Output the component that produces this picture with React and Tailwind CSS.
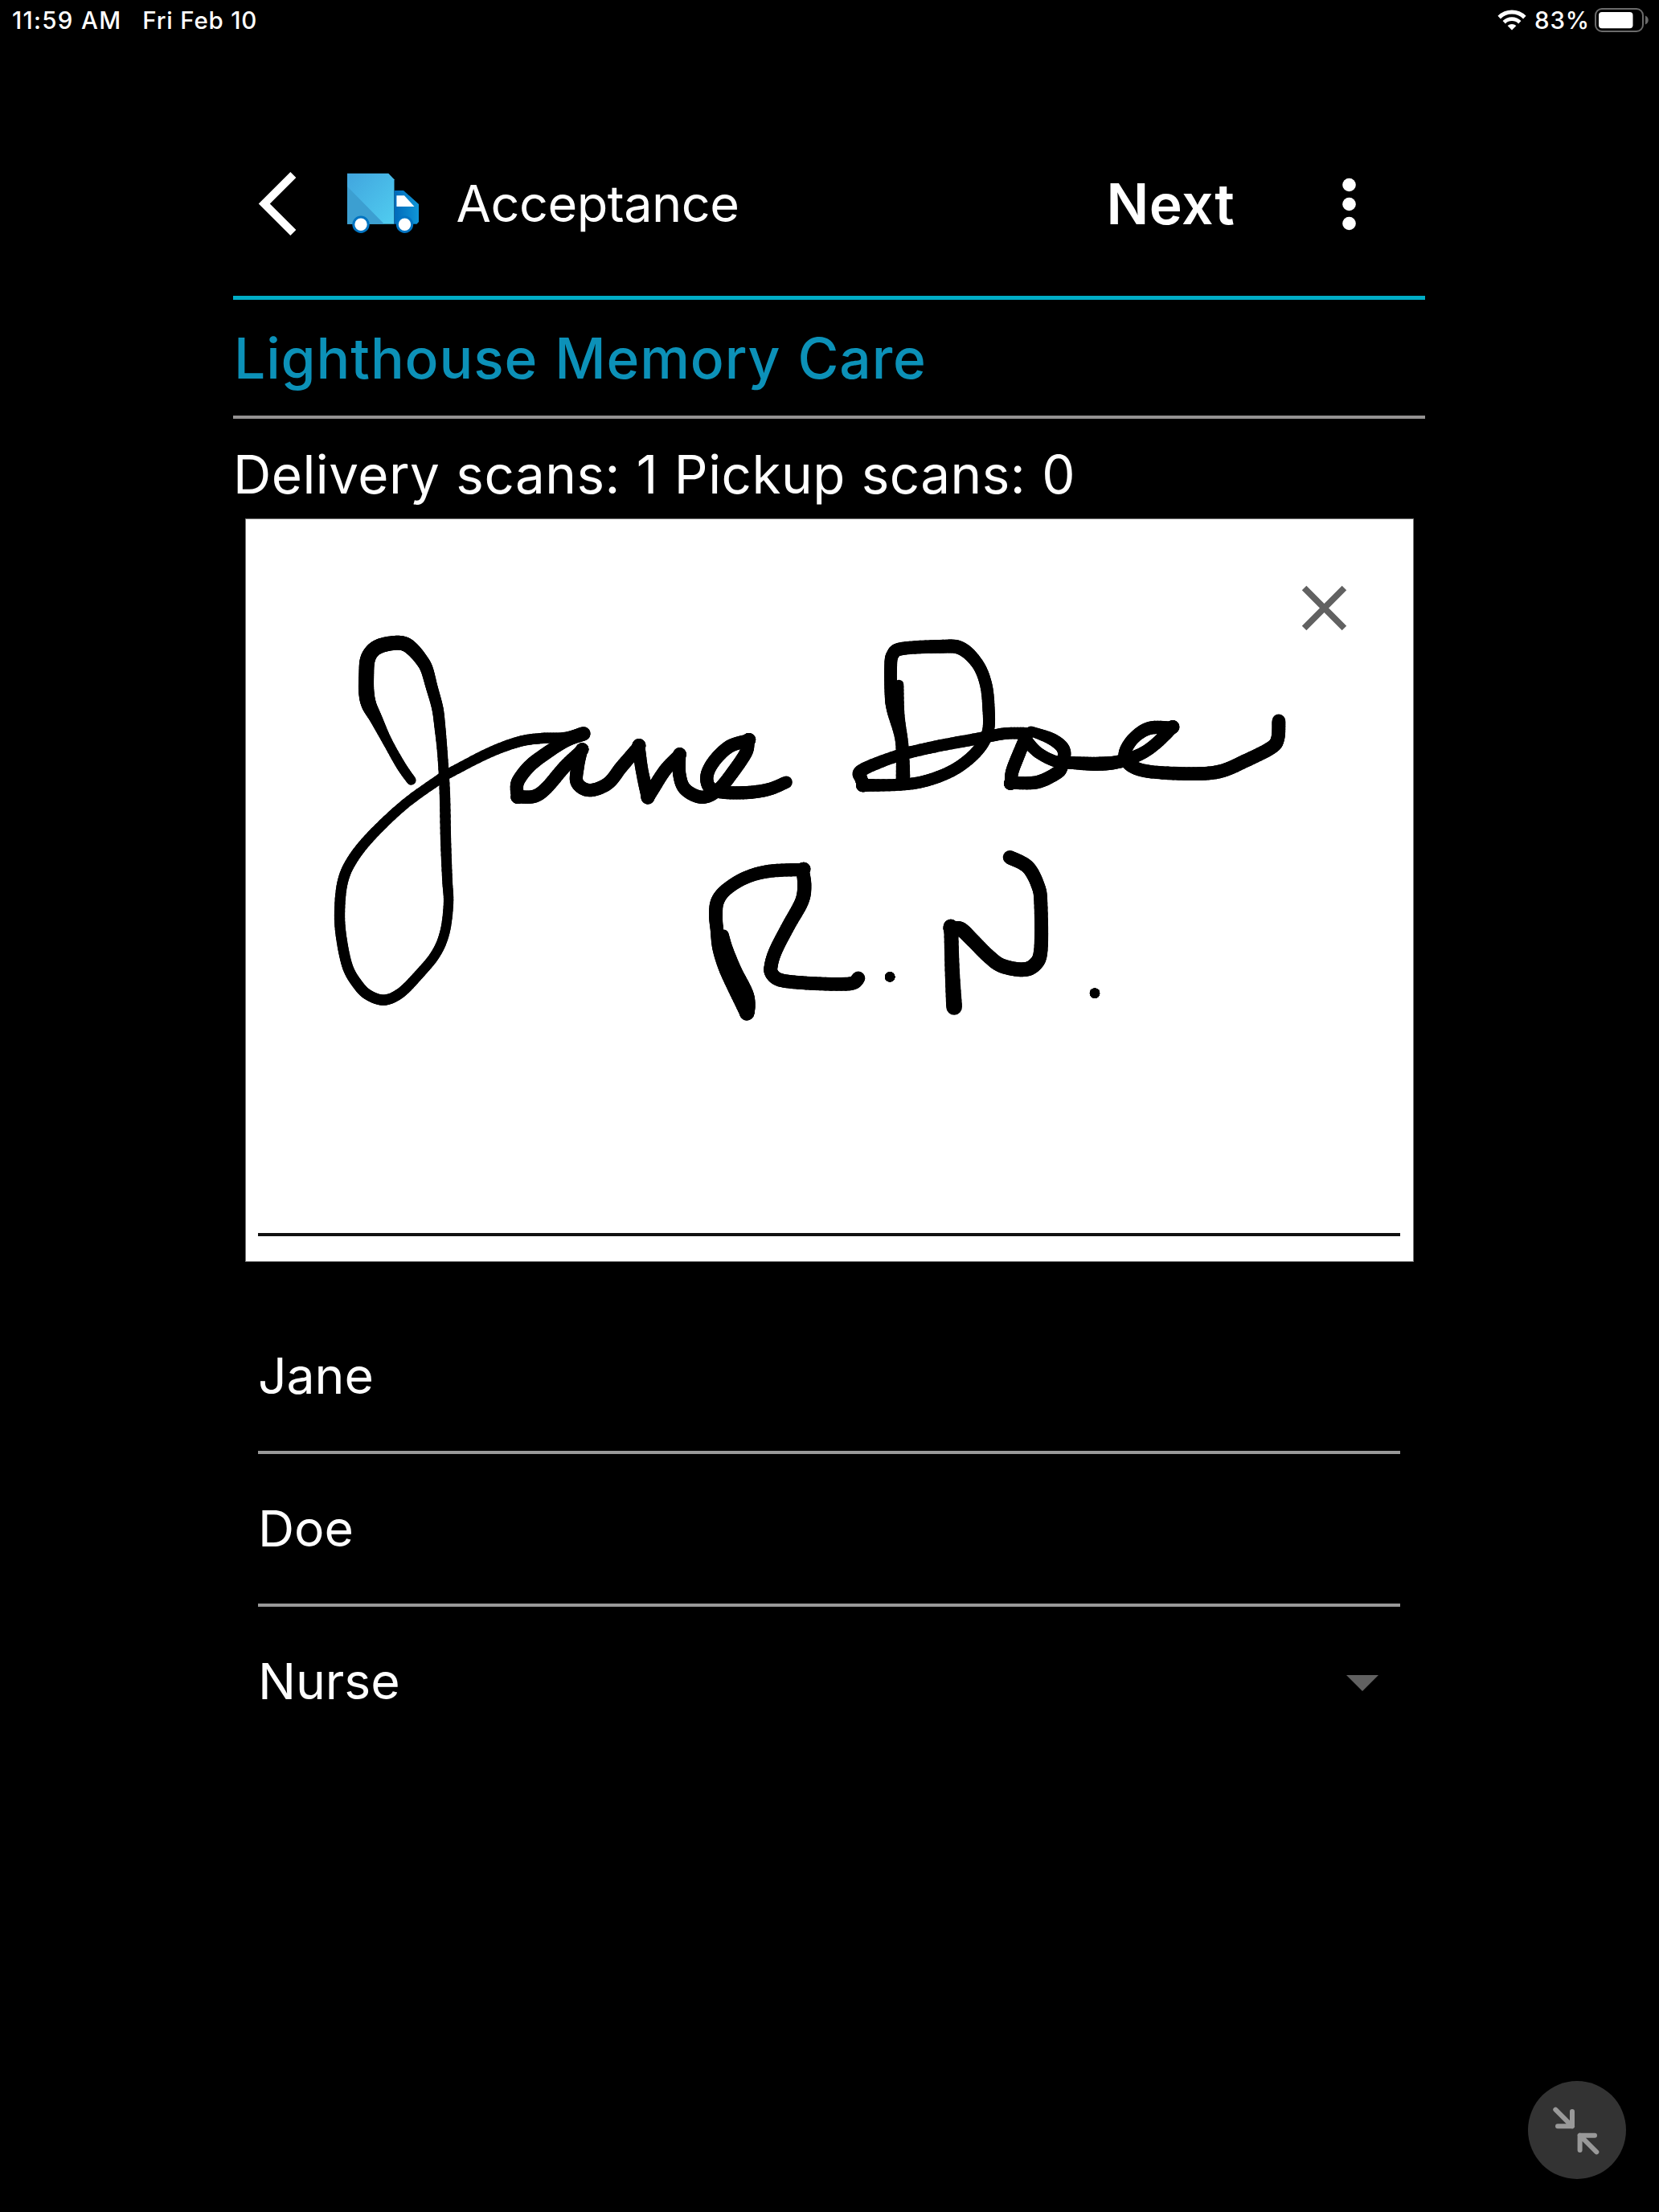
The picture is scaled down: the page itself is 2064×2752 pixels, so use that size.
import React, { useState } from "react";
import { MdArrowBackIosNew, MdClose } from "react-icons/md";

// Each stroke is a list of [x, y, penWidth]. x/y are digitizer units,
// turned into pad pixels with the origin and resolution of its group.
const signature = [
  {
    origin: [94.3, 114.5],
    res: [2.613, 3],
    strokes: [
      [
        [291, 631, 11], [257, 575, 11.5], [212, 483, 11.5], [176, 400, 15], [153, 348, 18],
        [145, 300, 18.5], [145, 240, 18], [148, 185, 18], [163, 150, 17.5], [190, 129, 17.5],
        [237, 118, 17], [270, 122, 17], [296, 143, 16.5], [322, 178, 15.5], [341, 215, 15],
        [358, 285, 14], [376, 360, 13.5], [384, 430, 13], [393, 540, 12], [400, 680, 12.5],
        [403, 850, 12.5], [408, 1000, 12], [412, 1090, 11.5], [400, 1198, 11.5], [370, 1280, 11.5],
        [315, 1357, 11.5], [257, 1424, 12], [203, 1451, 12.5], [150, 1431, 12.5], [115, 1390, 12.5],
        [85, 1330, 12.5], [66, 1235, 12.5], [58, 1135, 12.5], [67, 1015, 12.5], [98, 930, 12.5],
        [162, 837, 12], [270, 720, 11.5], [385, 625, 11.5], [415, 604, 11.5], [540, 530, 12],
        [640, 487, 12.5], [715, 474, 12.5], [790, 471, 12.5], [851, 457, 16.5],
      ],
      [
        [851, 457, 16.5], [800, 480, 15], [745, 518, 15], [680, 573, 15.5], [640, 630, 15.5],
        [634, 665, 15.5], [639, 692, 15.5], [639, 692, 15.5], [690, 691, 15.5], [730, 660, 15.5],
        [790, 580, 15.5], [843, 522, 15], [843, 522, 15], [832, 580, 15.5], [830, 640, 15.5],
        [870, 668, 15.5], [930, 643, 15.5], [975, 580, 15.5], [1028, 510, 15.5], [1030, 510, 15.5],
        [1042, 600, 15], [1059, 684, 16], [1065, 684, 16], [1115, 595, 15.5], [1160, 541, 15.5],
        [1162, 541, 15.5], [1163, 610, 15.5], [1182, 665, 15.5], [1237, 694, 15.5], [1290, 665, 15.5],
        [1340, 595, 15.5], [1380, 525, 15.5], [1385, 483, 15.5], [1385, 483, 15.5], [1325, 505, 15.5],
        [1275, 560, 15.5], [1252, 615, 15.5], [1263, 660, 15.5], [1310, 676, 15.5], [1390, 676, 15.5],
        [1455, 664, 15], [1510, 638, 14.5],
      ],
    ],
  },
  {
    origin: [734.5, 114.3],
    res: [2.529, 3],
    strokes: [
      [[197, 274, 11], [200, 390, 11], [208, 510, 15], [210, 635, 17]],
      [
        [210, 600, 16], [203, 480, 13.5], [178, 370, 14.5], [172, 310, 15], [171, 210, 15],
        [177, 163, 15], [207, 140, 15.5], [325, 132, 16], [391, 138, 16], [443, 195, 14.5],
        [470, 270, 14.5], [479, 360, 14.5], [477, 450, 14], [445, 520, 14], [380, 585, 14],
        [300, 627, 14], [215, 647, 14], [92, 650, 15], [88, 649, 15], [78, 625, 15],
        [80, 594, 15], [190, 541, 14], [310, 506, 14], [445, 476, 14], [530, 457, 14],
        [600, 456, 14],
      ],
      [
        [600, 460, 15], [572, 540, 15.5], [553, 600, 15.5], [550, 641, 15], [554, 641, 15],
        [630, 639, 15.5], [690, 607, 15.5], [709, 580, 15.5], [716, 520, 15.5], [680, 479, 14.5],
        [612, 448, 11.5],
      ],
      [
        [597, 482, 14.5], [635, 528, 13.5], [690, 561, 13.5], [740, 566, 15], [820, 570, 16.5],
        [890, 562, 15.5], [960, 532, 14.5], [1010, 490, 14.5], [1054, 436, 15.5], [1050, 436, 15.5],
        [985, 437, 15.5], [935, 475, 14.5], [908, 530, 15], [922, 572, 15.5], [980, 598, 15.5],
        [1110, 607, 16], [1205, 599, 16], [1285, 560, 16], [1368, 510, 16], [1389, 475, 16],
        [1392, 410, 16],
      ],
    ],
  },
  {
    origin: [554.3, 394.3],
    res: [2.904, 3],
    strokes: [
      [
        [117, 366, 11], [132, 420, 11.5], [160, 500, 14], [187, 560, 16], [200, 600, 18],
        [202, 635, 18.5], [200, 660, 18],
      ],
      [
        [200, 660, 17], [160, 570, 18.5], [124, 490, 18], [100, 415, 16.5], [92, 350, 15.5],
        [88, 300, 16], [93, 245, 16], [125, 200, 15], [195, 155, 15], [280, 131, 15.5],
        [397, 125, 15.5], [401, 127, 15.5], [408, 185, 16.5], [398, 245, 16.5], [350, 335, 16],
        [305, 425, 16], [288, 480, 16], [290, 513, 16], [325, 538, 16], [430, 549, 16],
        [570, 551, 16], [603, 530, 16],
      ],
      [[717, 525, 11.5], [717, 525.5, 11.5]],
      [
        [949, 638, 19], [942, 500, 17.5], [938, 348, 17], [938, 348, 17], [972, 347, 17.5],
        [1015, 388, 17], [1070, 445, 17], [1120, 483, 17], [1195, 498, 17], [1240, 480, 17],
        [1262, 425, 16.5], [1262, 250, 16], [1252, 185, 16], [1215, 115, 16.5], [1150, 79, 16.5],
      ],
      [[1457, 586, 11.5], [1457, 586.5, 11.5]],
    ],
  },
];

const STEPS = 8;
const INK_SPREAD = 0.8;

// Catmull-Rom through the points, pen width included
function smooth(points) {
  const out = [];
  for (let i = 0; i < points.length - 1; i++) {
    const p0 = points[i - 1] || points[i];
    const p1 = points[i];
    const p2 = points[i + 1];
    const p3 = points[i + 2] || p2;
    for (let s = 0; s < STEPS; s++) {
      const t = s / STEPS;
      out.push(
        p1.map(
          (v, k) =>
            0.5 *
            (2 * v +
              (p2[k] - p0[k]) * t +
              (2 * p0[k] - 5 * v + 4 * p2[k] - p3[k]) * t * t +
              (3 * v - p0[k] - 3 * p2[k] + p3[k]) * t * t * t)
        )
      );
    }
  }
  out.push(points[points.length - 1]);
  return out;
}

function Stroke({ points, origin, res }) {
  const pts = smooth(
    points.map(([x, y, w]) => [
      origin[0] + x / res[0],
      origin[1] + y / res[1],
      w + INK_SPREAD,
    ])
  );
  return pts.slice(1).map((p, i) => (
    <line
      key={i}
      x1={pts[i][0].toFixed(2)}
      y1={pts[i][1].toFixed(2)}
      x2={p[0].toFixed(2)}
      y2={p[1].toFixed(2)}
      strokeWidth={((pts[i][2] + p[2]) / 2).toFixed(2)}
    />
  ));
}

function StatusBar() {
  return (
    <div className="flex h-[50px] items-center justify-between pr-[13px] pl-[15px] text-[29.5px] leading-[49px] font-[460]">
      <div className="flex gap-[26px]">
        <span className="tracking-[1.3px]">11:59 AM</span>
        <span className="tracking-[0.8px]">Fri Feb 10</span>
      </div>
      <div className="flex items-center">
        <svg className="mr-[10px] h-[26px] w-[36px]" viewBox="0 0 36 26" fill="none" stroke="#fff">
          <path d="M2.2 9.6A22.5 22.5 0 0 1 33.8 9.6" strokeWidth="5" />
          <path d="M8.2 15.7A14 14 0 0 1 27.8 15.7" strokeWidth="4.8" />
          <path d="M18 25.5L12.6 20.1A7.7 7.7 0 0 1 23.4 20.1Z" fill="#fff" stroke="none" />
        </svg>
        <span className="mr-[6px] tracking-[0.9px]">83%</span>
        <svg className="h-[30px] w-[67px]" viewBox="0 0 67 30">
          <rect x="1" y="1" width="59" height="28" rx="8" fill="none" stroke="#6b6b6b" strokeWidth="2" />
          <rect x="5" y="5" width="42.5" height="20.3" rx="4" fill="#fff" />
          <path d="M63 9.5C68 11.5 68 18.5 63 20.5Z" fill="#6b6b6b" />
        </svg>
      </div>
    </div>
  );
}

function TruckIcon() {
  return (
    <svg className="h-[76px] w-[90px]" viewBox="0 0 90 76">
      <defs>
        <linearGradient id="box" x1="0" y1="0" x2="1" y2="1">
          <stop offset="0" stopColor="#41a5de" />
          <stop offset="1" stopColor="#50cdf0" />
        </linearGradient>
        <linearGradient id="cab" x1="0" y1="0" x2="1" y2="0">
          <stop offset="0" stopColor="#0069b9" />
          <stop offset="1" stopColor="#0f96d7" />
        </linearGradient>
      </defs>
      <path d="M0 0.7H51.3L58.5 8.3V63.7H0Z" fill="url(#box)" />
      <path d="M0 17L46 63.7H0Z" fill="#3c9fd1" />
      <path d="M58.5 22H70L89 39V61L86.500 63.7H58.5Z" fill="url(#cab)" />
      <path d="M61.4 28.3H71L83.5 42H61.4Z" fill="#fff" />
      <circle cx="17" cy="64.2" r="9.2" fill="#fff" stroke="#0074c2" strokeWidth="3" />
      <circle cx="71.5" cy="64.2" r="9.2" fill="#fff" stroke="#0074c2" strokeWidth="3" />
    </svg>
  );
}

function Header() {
  return (
    <div className="flex h-[234px] items-center border-b-5 border-[#00adc6] pl-[8px]">
      <button>
        <MdArrowBackIosNew size={95} />
      </button>
      <div className="mb-px ml-[38.5px]">
        <TruckIcon />
      </div>
      <h1 className="mb-[2px] ml-[46px] text-[63px] leading-[80px] font-[440] tracking-[-0.5px]">
        Acceptance
      </h1>
      <button className="ml-auto text-[69.5px] leading-[80px] font-[560] tracking-[0.6px]">
        Next
      </button>
      <button className="mr-[86px] ml-[133.5px]">
        <svg className="h-[66px] w-[17px]" viewBox="0 0 17 66" fill="#fff">
          <circle cx="8.5" cy="9" r="8.3" />
          <circle cx="8.5" cy="33" r="8.3" />
          <circle cx="8.5" cy="57" r="8.3" />
        </svg>
      </button>
    </div>
  );
}

function SignaturePad() {
  const [signed, setSigned] = useState(true);

  return (
    <div className="relative -mt-px mr-[14px] ml-[15px] flex h-[925px] flex-col justify-end border border-[#777] bg-white pr-[16px] pb-[31px] pl-[15px]">
      <div className="h-[4px] bg-[#111]" />
      {signed && (
        <svg
          className="absolute inset-0 h-full w-full"
          viewBox="0 0 1452 923"
          stroke="#000"
          strokeLinecap="round"
        >
          {signature.map((group, g) =>
            group.strokes.map((points, i) => (
              <Stroke key={`${g}-${i}`} points={points} origin={group.origin} res={group.res} />
            ))
          )}
        </svg>
      )}
      <button className="absolute top-[63px] right-[63px]" onClick={() => setSigned(false)}>
        <MdClose size={95} color="#616161" />
      </button>
    </div>
  );
}

function App() {
  return (
    <div className="relative flex h-[2752px] w-[2064px] flex-col bg-black font-['Inter',sans-serif] text-white">
      <StatusBar />

      <div className="mt-[89px] ml-[290px] flex w-[1483px] flex-col">
        <Header />
        <h2 className="h-[148px] border-b-4 border-[#949292] pt-[2px] pl-px text-[69.5px] leading-[142px] font-medium tracking-[0.9px] [word-spacing:1.5px] whitespace-nowrap text-[#0c91b8]">
          Lighthouse Memory Care
        </h2>
        <p className="h-[125px] pt-[14px] text-[65.5px] leading-[112px] font-[440] tracking-[0.5px] [word-spacing:1px] whitespace-nowrap">
          Delivery scans: 1 Pickup scans: 0
        </p>

        <SignaturePad />

        <div className="mt-[49px] mr-[31px] ml-[31px] text-[62.5px] font-[440] tracking-[-0.1px]">
          <div className="flex h-[190px] items-center border-b-4 border-[#999] pb-px">Jane</div>
          <div className="flex h-[190px] items-center border-b-4 border-[#999] pb-px">Doe</div>
          <div className="flex h-[186px] items-center justify-between pr-[27px] pb-px">
            Nurse
            <svg className="mt-[4px] h-[20px] w-[40px]" viewBox="0 0 40 20">
              <path d="M0 0H40L20 20Z" fill="#616161" />
            </svg>
          </div>
        </div>
      </div>

      <button className="absolute right-[41px] bottom-[41px] h-[122px] w-[122px] rounded-full bg-[#333]">
        <svg
          className="h-full w-full"
          viewBox="0 0 122 122"
          fill="none"
          stroke="#999"
          strokeWidth="6"
          strokeLinecap="round"
          strokeLinejoin="round"
        >
          <path d="M34.3 35.7L55 56.3M55 38V56.3H37" />
          <path d="M85.3 88.3L64.6 67.7M64.6 86V67.7H83" />
        </svg>
      </button>
    </div>
  );
}

export default App;
